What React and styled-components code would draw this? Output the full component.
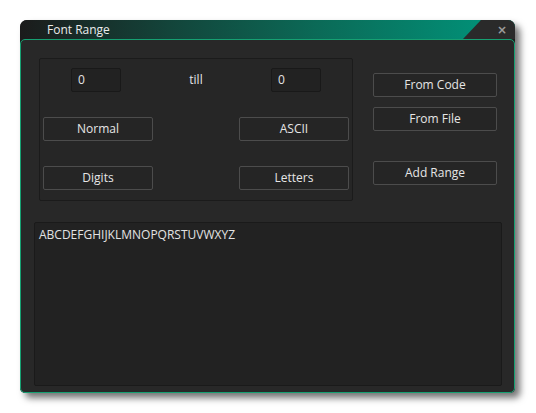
import React from 'react';
import styled, { createGlobalStyle } from 'styled-components';

const Global = createGlobalStyle`
    html, body {
        margin: 0;
        padding: 0;
        background: #ffffff;
        font-family: "Open Sans", "Noto Sans", sans-serif;
    }
`;

const Page = styled.div`
    width: 536px;
    height: 413px;
    padding: 20px 0 0 20px;
    box-sizing: border-box;
`;

const Window = styled.div`
    width: 495px;
    height: 373px;
    display: flex;
    flex-direction: column;
    background: #1d1d1d;
    border-radius: 7px 7px 5px 5px;
    box-shadow: 5px 5px 7px rgba(0, 0, 0, 0.55);
`;

const TitleBar = styled.div`
    height: 19px;
    flex: none;
    display: flex;
    align-items: center;
    position: relative;
    border-radius: 7px 7px 0 0;
    background: linear-gradient(to right, #1b1b1b 0%, #13443a 30%, #0b6a57 60%, #00977d 100%);
    overflow: hidden;
`;

const Title = styled.span`
    margin-left: 27px;
    color: #ececec;
    font-size: 12px;
`;

const CloseTab = styled.div`
    position: absolute;
    top: 0;
    right: 0;
    width: 52px;
    height: 19px;
    background: #2a2a2a;
    clip-path: polygon(18px 0, 100% 0, 100% 100%, 0 100%);
    display: flex;
    align-items: center;
    justify-content: flex-end;
    padding-right: 8px;
    box-sizing: border-box;
    color: #9c9c9c;
    font-size: 12px;
    font-weight: bold;
    font-family: "DejaVu Sans", sans-serif;
`;

const Body = styled.div`
    flex: 1;
    display: flex;
    flex-direction: column;
    background: #282828;
    border: 1px solid #16a072;
    border-radius: 5px;
`;

const TopRow = styled.div`
    display: flex;
    gap: 20px;
    margin: 18px 0 0 18px;
`;

const GroupBox = styled.div`
    width: 314px;
    height: 143px;
    box-sizing: border-box;
    background: #262626;
    border: 1px solid #1b1b1b;
    border-radius: 2px;
    display: grid;
    grid-template-columns: 110px 1fr 110px;
    grid-template-rows: 24px 24px 24px;
    row-gap: 25px;
    padding: 9px 3px 0 3px;
`;

const Field = styled.div`
    width: 50px;
    height: 24px;
    box-sizing: border-box;
    justify-self: ${p => p.$side === 'left' ? 'start' : 'end'};
    margin-${p => p.$side === 'left' ? 'left' : 'right'}: 28px;
    background: #222222;
    border: 1px solid #191919;
    border-radius: 2px;
    color: #e4e4e4;
    font-size: 12px;
    line-height: 22px;
    padding-left: 6px;
`;

const Label = styled.div`
    color: #e4e4e4;
    font-size: 12px;
    line-height: 24px;
    text-align: center;
`;

const Button = styled.div`
    box-sizing: border-box;
    width: ${p => p.$wide ? '124px' : '110px'};
    height: 24px;
    background: #252525;
    border: 1px solid #4c4c4c;
    border-radius: 2px;
    color: #e6e6e6;
    font-size: 12px;
    line-height: 22px;
    text-align: center;
    grid-column: ${p => p.$col || 'auto'};
`;

const SideColumn = styled.div`
    display: flex;
    flex-direction: column;
    padding-top: 15px;
    gap: 10px;
`;

const Spacer = styled.div`
    height: 10px;
`;

const TextBox = styled.div`
    flex: 1;
    margin: 21px 12px 6px 13px;
    background: #222222;
    border: 1px solid #1a1a1a;
    border-radius: 2px;
    color: #e2e2e2;
    font-size: 12px;
    padding: 3px 4px;
`;

export default function App() {
    return (
        <Page>
            <Global />
            <Window>
                <TitleBar>
                    <Title>Font Range</Title>
                    <CloseTab>×</CloseTab>
                </TitleBar>
                <Body>
                    <TopRow>
                        <GroupBox>
                            <Field $side="left">0</Field>
                            <Label>till</Label>
                            <Field $side="right">0</Field>
                            <Button $col="1">Normal</Button>
                            <Button $col="3">ASCII</Button>
                            <Button $col="1">Digits</Button>
                            <Button $col="3">Letters</Button>
                        </GroupBox>
                        <SideColumn>
                            <Button $wide>From Code</Button>
                            <Button $wide>From File</Button>
                            <Spacer />
                            <Button $wide>Add Range</Button>
                        </SideColumn>
                    </TopRow>
                    <TextBox>ABCDEFGHIJKLMNOPQRSTUVWXYZ</TextBox>
                </Body>
            </Window>
        </Page>
    );
}
